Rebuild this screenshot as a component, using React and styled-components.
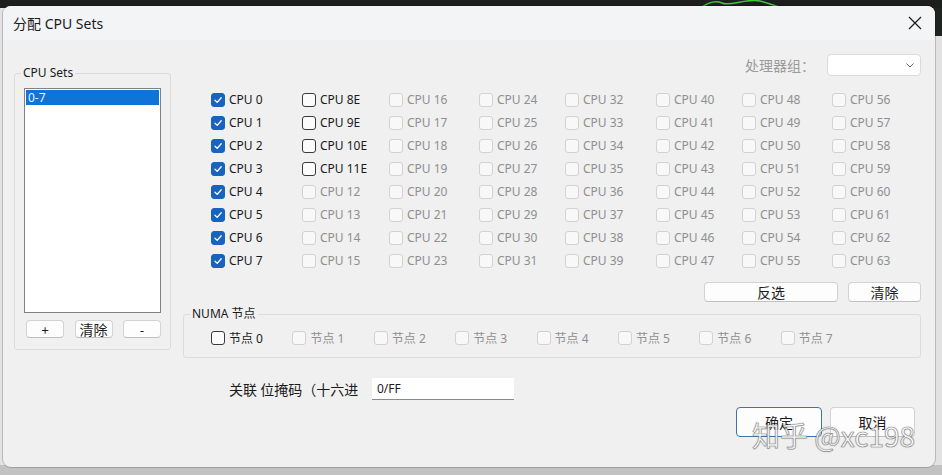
import React from "react";
import styled, { createGlobalStyle } from "styled-components";

const GlobalStyle = createGlobalStyle`
  html, body {
    margin: 0;
    padding: 0;
  }
  body {
    width: 942px;
    height: 475px;
    overflow: hidden;
    font-family: "Noto Sans", "Noto Sans CJK SC", sans-serif;
    color: #1b1b1b;
    background:
      linear-gradient(#1d1f1d, #1d1f1d) 0 0 / 100% 8px no-repeat,
      linear-gradient(#202420, #202420) 100% 0 / 12px 36px no-repeat,
      linear-gradient(#c2c2c2, #c2c2c2) 0 100% / 100% 10px no-repeat,
      #e2e2e2;
  }
`;

const cpuColumns = [
  [0, 1, 2, 3, 4, 5, 6, 7].map(n => ({ label: `CPU ${n}`, state: "checked" })),
  [
    { label: "CPU 8E", state: "on" },
    { label: "CPU 9E", state: "on" },
    { label: "CPU 10E", state: "on" },
    { label: "CPU 11E", state: "on" },
    { label: "CPU 12", state: "off" },
    { label: "CPU 13", state: "off" },
    { label: "CPU 14", state: "off" },
    { label: "CPU 15", state: "off" }
  ]
];
for (let c = 2; c < 8; c++) {
  let col = [];
  for (let r = 0; r < 8; r++) {
    col.push({ label: `CPU ${c * 8 + r}`, state: "off" });
  }
  cpuColumns.push(col);
}

const numaNodes = [0, 1, 2, 3, 4, 5, 6, 7].map(n => ({
  label: `节点 ${n}`,
  state: n === 0 ? "on" : "off"
}));

const Backdrop = styled.svg`
  position: absolute;
  left: 0;
  top: 0;
`;

const Window = styled.div`
  position: relative;
  margin: 6px 0 0 3px;
  width: 932px;
  height: 461px;
  box-sizing: border-box;
  border-radius: 8px;
  background: #f0f0f0;
  box-shadow: 0 0 0 1px rgba(0, 0, 0, 0.18);
  display: flex;
  flex-direction: column;
  overflow: visible;
`;

const TitleBar = styled.div`
  height: 34px;
  display: flex;
  align-items: center;
  justify-content: space-between;
  padding: 0 12px 0 10px;
  background: #f3f4f6;
  border-radius: 8px 8px 0 0;
`;

const Title = styled.span`
  font-size: 14px;
  color: #1a1a1a;
`;

const CloseIcon = styled.svg`
  display: block;
`;

const Content = styled.div`
  display: grid;
  grid-template-columns: 157px 738px;
  column-gap: 12px;
  padding: 14px 14px 0 11px;
`;

const LeftCol = styled.div`
  padding-top: 11px;
`;

const Group = styled.fieldset`
  margin: ${p => p.$top || 0}px 0 0 0;
  padding: 0 9px ${p => p.$bottom || 0}px 9px;
  border: 1px solid #dcdcdc;
  border-radius: 3px;
  min-inline-size: 0;
`;

const Legend = styled.legend`
  padding: 0 2px;
  margin-left: -3px;
  font-size: 12px;
  line-height: 16px;
  color: #1b1b1b;
`;

const ListBox = styled.div`
  margin-top: 7px;
  height: 225px;
  box-sizing: border-box;
  background: #fff;
  border: 1px solid #828282;
  padding: 1px;
`;

const ListItem = styled.div`
  height: 15px;
  line-height: 15px;
  padding-left: 2px;
  font-size: 12px;
  color: #e8f4ff;
  background: ${p => (p.$selected ? "#0f74d8" : "transparent")};
`;

const SmallButtons = styled.div`
  margin-top: 7px;
  padding-left: 2px;
  display: flex;
  justify-content: space-between;
`;

const Button = styled.button`
  width: ${p => p.$w}px;
  height: ${p => p.$h}px;
  box-sizing: border-box;
  padding: 0;
  margin: 0;
  background: #fdfdfd;
  border: ${p => (p.$focus ? "1.5px solid #3d74ad" : "1px solid #d3d3d3")};
  border-bottom-color: ${p => (p.$focus ? "#3d74ad" : "#c0c0c0")};
  border-radius: 4px;
  font-family: "Noto Sans CJK SC", "Noto Sans", sans-serif;
  font-size: ${p => p.$fs || 14}px;
  color: #1b1b1b;
  line-height: 1;
  display: flex;
  align-items: center;
  justify-content: center;
`;

const RightCol = styled.div`
  display: flex;
  flex-direction: column;
`;

const GroupRow = styled.div`
  height: 22px;
  display: flex;
  justify-content: flex-end;
  align-items: center;
  gap: 12px;
`;

const DimLabel = styled.span`
  font-family: "Noto Sans CJK SC", sans-serif;
  font-size: 14px;
  color: #9a9a9a;
`;

const Combo = styled.div`
  width: 94px;
  height: 22px;
  box-sizing: border-box;
  background: #fff;
  border: 1px solid #dadada;
  border-radius: 4px;
  display: flex;
  align-items: center;
  justify-content: flex-end;
  padding-right: 5px;
`;

const CpuGrid = styled.div`
  margin-top: 12px;
  padding-left: 28px;
  display: grid;
  grid-template-columns: 91px 87px 90px 86px 91px 86px 90px 1fr;
  grid-template-rows: repeat(8, 23px);
  grid-auto-flow: column;
`;

const NodeGrid = styled.div`
  margin-top: 5px;
  padding-left: 18px;
  display: grid;
  grid-template-columns: repeat(8, 81.4px);
  height: 22px;
`;

const CheckItem = styled.label`
  display: flex;
  align-items: center;
  gap: 4px;
  font-size: 12px;
  white-space: nowrap;
  color: ${p => (p.$state === "off" ? "#8f8f8f" : "#1b1b1b")};
`;

const Box = styled.span`
  width: 14px;
  height: 14px;
  box-sizing: border-box;
  border-radius: 3px;
  flex: none;
  display: flex;
  align-items: center;
  justify-content: center;
  background: ${p =>
    p.$state === "checked" ? "#1763bd" : p.$state === "on" ? "#fbfbfb" : "#f8f8f8"};
  border: 1px solid
    ${p =>
      p.$state === "checked" ? "#1763bd" : p.$state === "on" ? "#3a3a3a" : "#d2d2d2"};
`;

const ActionRow = styled.div`
  margin-top: 10px;
  display: flex;
  justify-content: flex-end;
  gap: 10px;
`;

const MaskRow = styled.div`
  margin-top: 20px;
  height: 22px;
  padding-left: 46px;
  display: flex;
  align-items: center;
`;

const MaskLabel = styled.span`
  width: 143px;
  font-family: "Noto Sans CJK SC", sans-serif;
  font-size: 14px;
  color: #1b1b1b;
  white-space: nowrap;
  overflow: hidden;
`;

const MaskInput = styled.div`
  width: 142px;
  height: 22px;
  box-sizing: border-box;
  background: #fff;
  border-bottom: 1px solid #8a8a8a;
  padding-left: 5px;
  font-size: 12px;
  line-height: 21px;
  color: #1b1b1b;
`;

const DialogButtons = styled.div`
  margin-top: 7px;
  padding-right: 6px;
  display: flex;
  justify-content: flex-end;
  gap: 8px;
`;

const Watermark = styled.div`
  position: absolute;
  left: 749px;
  top: 412px;
  font-family: "Noto Sans CJK SC", "Noto Sans", sans-serif;
  font-size: 28px;
  line-height: 34px;
  white-space: nowrap;
  color: rgba(255, 255, 255, 0.92);
  -webkit-text-stroke: 0.7px rgba(110, 110, 110, 0.75);
  text-shadow: 0 0 2px rgba(0, 0, 0, 0.25);
  pointer-events: none;
`;

const Check = ({ state }) => (
  <Box $state={state}>
    {state === "checked" && (
      <svg width="10" height="10" viewBox="0 0 10 10">
        <polyline
          points="2,5.3 4.2,7.4 8.2,2.8"
          fill="none"
          stroke="#fff"
          strokeWidth="1.3"
          strokeLinecap="round"
          strokeLinejoin="round"
        />
      </svg>
    )}
  </Box>
);

const CheckOption = ({ label, state }) => (
  <CheckItem $state={state}>
    <Check state={state} />
    {label}
  </CheckItem>
);

export default function App() {
  return (
    <>
      <GlobalStyle />
      <Backdrop width="942" height="8" viewBox="0 0 942 8">
        <path
          d="M700 8 C710 2 716 0 722 3 C730 7 745 -2 760 1 C768 3 775 6 782 8"
          fill="none"
          stroke="#3fc43f"
          strokeWidth="1.5"
        />
      </Backdrop>
      <Window>
        <TitleBar>
          <Title>分配 CPU Sets</Title>
          <CloseIcon width="16" height="16" viewBox="0 0 16 16">
            <path d="M2 2 L14 14 M14 2 L2 14" stroke="#1a1a1a" strokeWidth="1.2" />
          </CloseIcon>
        </TitleBar>
        <Content>
          <LeftCol>
            <Group $bottom={11}>
              <Legend>CPU Sets</Legend>
              <ListBox>
                <ListItem $selected>0-7</ListItem>
              </ListBox>
              <SmallButtons>
                <Button $w={38} $h={18} $fs={13}>+</Button>
                <Button $w={38} $h={18} $fs={14}>清除</Button>
                <Button $w={38} $h={18} $fs={13}>-</Button>
              </SmallButtons>
            </Group>
          </LeftCol>
          <RightCol>
            <GroupRow>
              <DimLabel>处理器组：</DimLabel>
              <Combo>
                <svg width="10" height="10" viewBox="0 0 10 10">
                  <polyline points="1.5,3.5 5,7 8.5,3.5" fill="none" stroke="#666" strokeWidth="1" />
                </svg>
              </Combo>
            </GroupRow>
            <CpuGrid>
              {cpuColumns.map(col =>
                col.map(item => (
                  <CheckOption key={item.label} label={item.label} state={item.state} />
                ))
              )}
            </CpuGrid>
            <ActionRow>
              <Button $w={134} $h={20}>反选</Button>
              <Button $w={73} $h={20}>清除</Button>
            </ActionRow>
            <Group $top={4} $bottom={8}>
              <Legend>NUMA 节点</Legend>
              <NodeGrid>
                {numaNodes.map(node => (
                  <CheckOption key={node.label} label={node.label} state={node.state} />
                ))}
              </NodeGrid>
            </Group>
            <MaskRow>
              <MaskLabel>关联 位掩码（十六进</MaskLabel>
              <MaskInput>0/FF</MaskInput>
            </MaskRow>
            <DialogButtons>
              <Button $w={86} $h={30} $focus>确定</Button>
              <Button $w={85} $h={30}>取消</Button>
            </DialogButtons>
          </RightCol>
        </Content>
        <Watermark>知乎 @xc198</Watermark>
      </Window>
    </>
  );
}
